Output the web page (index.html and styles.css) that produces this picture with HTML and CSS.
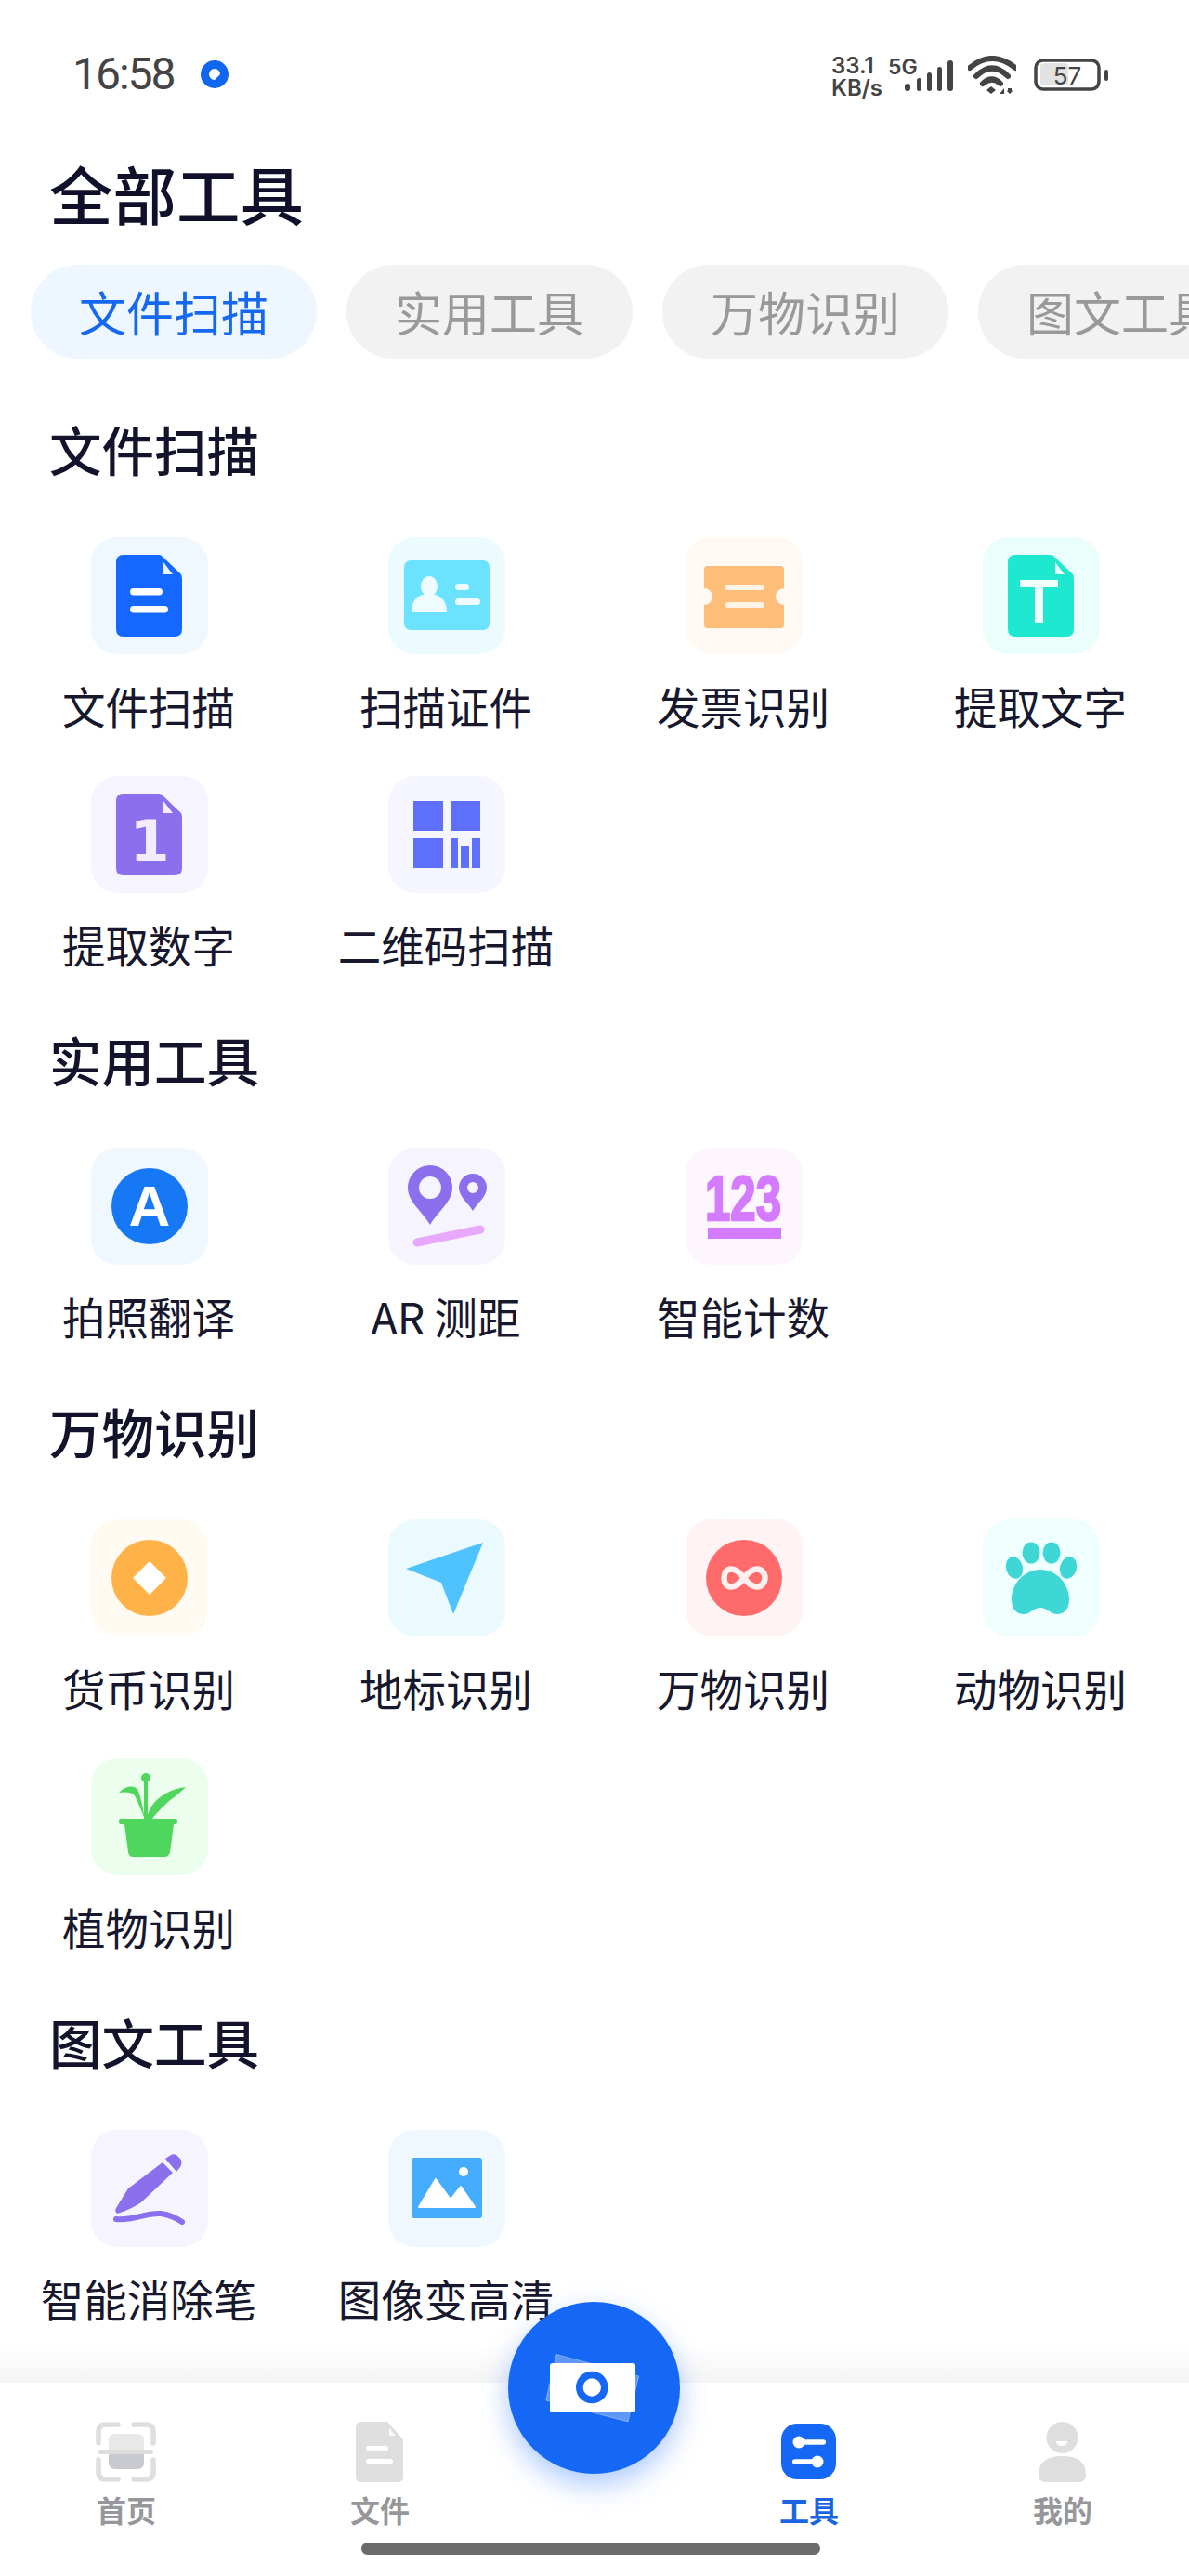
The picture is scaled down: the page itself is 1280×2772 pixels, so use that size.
FILE: index.html
```html
<!DOCTYPE html>
<html lang="zh-CN">
<head>
<meta charset="utf-8">
<title>全部工具</title>
<link rel="stylesheet" href="styles.css">
</head>
<body>
<div class="screen">
  <header class="status">
    <div class="status-left">
      <span class="time">16:58</span>
      <svg class="ring" viewBox="0 0 30 30" width="30" height="30"><circle cx="15" cy="15" r="10.5" fill="none" stroke="#1166ee" stroke-width="9"/><path d="M15 21 L21 15 L24 24 Z" fill="#1166ee"/></svg>
    </div>
    <div class="status-right">
      <div class="speed"><span>33.1</span><span>KB/s</span></div>
      <svg class="net" viewBox="0 0 70 40" width="70" height="40" fill="#444">
        <text x="0" y="20" class="fivegee">5G</text>
        <rect x="18" y="30" width="6" height="8" rx="3"/><rect x="31" y="24" width="5" height="14" rx="2.5"/><rect x="42" y="18" width="5" height="20" rx="2.5"/><rect x="53" y="12" width="5" height="26" rx="2.5"/><rect x="64" y="5" width="6" height="33" rx="3"/>
      </svg>
      <svg class="wifi" viewBox="0 0 52 44" width="52" height="44" fill="none" stroke="#444" stroke-width="6" stroke-linecap="round">
        <path d="M2 13 Q26 -7 51 13"/><path d="M9 22 Q26 5 43 22"/><path d="M16 30 Q26 21 35 30"/>
        <path d="M25 33 L30 37 L25 41 L20 37 Z" fill="#444" stroke="none"/>
        <path d="M34 41 L39 35 V41 Z M43 35 H47 V37 L48 38 L45 41 L42 38 L43 37 Z" fill="#444" stroke="none"/>
      </svg>
      <svg class="battery" viewBox="0 0 80 40" width="80" height="40">
        <rect x="7" y="8" width="30" height="24" rx="4" fill="#e2e2e2"/>
        <rect x="2" y="5" width="68" height="31" rx="8" fill="none" stroke="#444" stroke-width="3.5"/>
        <rect x="76" y="15" width="4" height="12" rx="2" fill="#444"/>
        <text x="36" y="31" class="batt-num">57</text>
      </svg>
    </div>
  </header>

  <h1 class="title">全部工具</h1>

  <nav class="tabs">
    <span class="tab active">文件扫描</span>
    <span class="tab">实用工具</span>
    <span class="tab">万物识别</span>
    <span class="tab">图文工具</span>
  </nav>

  <section class="section">
    <h2 class="heading">文件扫描</h2>
    <div class="grid">
      <div class="tool">
        <div class="tile bg-blue"><svg viewBox="0 0 126 126">
          <path d="M35 19 H73 Q76 19 77 21 L97 40 Q98 42 98 45 V99 Q98 107 90 107 H35 Q27 107 27 99 V27 Q27 19 35 19 Z" fill="#1468ff"/>
          <path d="M78 27 L88 40 H78 Z" fill="#eaf3ff"/>
          <rect x="42" y="55" width="35" height="7.5" rx="3.7" fill="#fff"/><rect x="42" y="74" width="41" height="7.5" rx="3.7" fill="#fff"/>
        </svg></div>
        <span class="label">文件扫描</span>
      </div>
      <div class="tool">
        <div class="tile bg-cyan"><svg viewBox="0 0 126 126">
          <rect x="17" y="25" width="92" height="75" rx="7" fill="#6be3ff"/>
          <ellipse cx="44" cy="53" rx="9" ry="11" fill="#eefcff"/>
          <path d="M25 81 Q25 65 37 62 H51 Q63 66 63 81 Z" fill="#eefcff"/>
          <rect x="72" y="50" width="15" height="7" rx="3.5" fill="#eefcff"/><rect x="72" y="66" width="27" height="7" rx="3.5" fill="#eefcff"/>
        </svg></div>
        <span class="label">扫描证件</span>
      </div>
      <div class="tool">
        <div class="tile bg-orange"><svg viewBox="0 0 126 126">
          <path d="M24 31 H102 Q106 31 106 35 V55 A9 9 0 0 0 106 73 V94 Q106 98 102 98 H24 Q20 98 20 94 V73 A9 9 0 0 0 20 55 V35 Q20 31 24 31 Z" fill="#ffbd7a"/>
          <rect x="43" y="51" width="42" height="6" rx="3" fill="#fff3e6"/><rect x="43" y="70" width="42" height="6" rx="3" fill="#fff3e6"/>
        </svg></div>
        <span class="label">发票识别</span>
      </div>
      <div class="tool">
        <div class="tile bg-teal"><svg viewBox="0 0 126 126">
          <path d="M35 19 H73 Q76 19 77 21 L97 40 Q98 42 98 45 V99 Q98 107 90 107 H35 Q27 107 27 99 V27 Q27 19 35 19 Z" fill="#1ee8d0"/>
          <path d="M78 27 L88 40 H78 Z" fill="#e8fffb"/>
          <rect x="40" y="46" width="41" height="8" fill="#f0fffc"/><rect x="56" y="46" width="9" height="46" fill="#f0fffc"/>
        </svg></div>
        <span class="label">提取文字</span>
      </div>
      <div class="tool">
        <div class="tile bg-violet"><svg viewBox="0 0 126 126">
          <path d="M35 19 H73 Q76 19 77 21 L97 40 Q98 42 98 45 V99 Q98 107 90 107 H35 Q27 107 27 99 V27 Q27 19 35 19 Z" fill="#8c6fec"/>
          <path d="M78 27 L88 40 H78 Z" fill="#f3efff"/>
          <text x="63" y="92" class="glyph-one">1</text>
        </svg></div>
        <span class="label">提取数字</span>
      </div>
      <div class="tool">
        <div class="tile bg-indigo"><svg viewBox="0 0 126 126" fill="#5e6ffb">
          <rect x="27" y="27" width="32" height="32"/><rect x="67" y="27" width="32" height="32"/><rect x="27" y="67" width="32" height="32"/>
          <rect x="67" y="67" width="8" height="32"/><rect x="78" y="75" width="9" height="24"/><rect x="90" y="67" width="9" height="32"/>
        </svg></div>
        <span class="label">二维码扫描</span>
      </div>
    </div>
  </section>

  <section class="section">
    <h2 class="heading">实用工具</h2>
    <div class="grid">
      <div class="tool">
        <div class="tile bg-blue"><svg viewBox="0 0 126 126">
          <circle cx="63" cy="63" r="41" fill="#1678f5"/>
          <text x="63" y="84" class="glyph-a">A</text>
        </svg></div>
        <span class="label">拍照翻译</span>
      </div>
      <div class="tool">
        <div class="tile bg-violet"><svg viewBox="0 0 126 126">
          <path fill-rule="evenodd" fill="#8c6fec" d="M45 83 C36 68 21 58 21 43 A24 24 0 0 1 69 43 C69 58 54 68 45 83 Z M45 31 A12 12 0 1 0 45 55 A12 12 0 1 0 45 31 Z"/>
          <path fill-rule="evenodd" fill="#8c6fec" d="M91 68 C86 59 76 53 76 43 A15 15 0 0 1 106 43 C106 53 96 59 91 68 Z M91 37 A6 6 0 1 0 91 49 A6 6 0 1 0 91 37 Z"/>
          <path d="M31 102 L99 88" stroke="#e8a8fb" stroke-width="9" stroke-linecap="round"/>
        </svg></div>
        <span class="label">AR 测距</span>
      </div>
      <div class="tool">
        <div class="tile bg-pink"><svg viewBox="0 0 126 126">
          <text x="21" y="78" class="glyph-nums" textLength="82" lengthAdjust="spacingAndGlyphs">123</text>
          <rect x="24" y="86" width="79" height="12" fill="#d47bff"/>
        </svg></div>
        <span class="label">智能计数</span>
      </div>
    </div>
  </section>

  <section class="section">
    <h2 class="heading">万物识别</h2>
    <div class="grid">
      <div class="tool">
        <div class="tile bg-cream"><svg viewBox="0 0 126 126">
          <circle cx="63" cy="63" r="41" fill="#ffb248"/>
          <path d="M63 45 L81 63 L63 81 L45 63 Z" fill="#fff"/>
        </svg></div>
        <span class="label">货币识别</span>
      </div>
      <div class="tool">
        <div class="tile bg-sky"><svg viewBox="0 0 126 126">
          <path d="M102 25 L19 53 L57 68 L70 102 Z" fill="#4fc3ff"/>
        </svg></div>
        <span class="label">地标识别</span>
      </div>
      <div class="tool">
        <div class="tile bg-red"><svg viewBox="0 0 126 126">
          <circle cx="63" cy="63" r="41" fill="#ff6b6b"/>
          <path d="M63 63 C57 55 52 53.500 49 53.500 C44 53.500 41.500 58 41.500 63 C41.500 68 44 72.500 49 72.500 C52 72.500 57 71 63 63 C69 55 74 53.500 77 53.500 C82 53.500 85.500 58 85.500 63 C85.500 68 82 72.500 77 72.500 C74 72.500 69 71 63 63 Z" fill="none" stroke="#fff0f0" stroke-width="6.500"/>
        </svg></div>
        <span class="label">万物识别</span>
      </div>
      <div class="tool">
        <div class="tile bg-mint"><svg viewBox="0 0 126 126" fill="#3fd6d6">
          <ellipse cx="34" cy="52" rx="9" ry="12" transform="rotate(-15 34 52)"/>
          <ellipse cx="52" cy="36" rx="9.500" ry="11.500"/>
          <ellipse cx="74" cy="36" rx="9.500" ry="11.500"/>
          <ellipse cx="92" cy="52" rx="9" ry="12" transform="rotate(15 92 52)"/>
          <path d="M62 54 C80 54 93 70 93 86 C93 97 87 102 80 102 C73 102 69 95 62 95 C55 95 51 102 44 102 C37 102 31 97 31 86 C31 70 44 54 62 54 Z"/>
        </svg></div>
        <span class="label">动物识别</span>
      </div>
      <div class="tool">
        <div class="tile bg-green"><svg viewBox="0 0 126 126" fill="#4fd65c">
          <path d="M32 65 H91 Q93 65 93 68 Q93 71 91 71 H89 L85 101 Q84 106 79 106 H45 Q41 106 40 101 L36 71 H32 Q30 71 30 68 Q30 65 32 65 Z"/>
          <circle cx="59" cy="21" r="5"/>
          <rect x="57" y="21" width="4" height="46"/>
          <path d="M30 37 C36 31 44 28 50 33 C54 42 56 55 58 66 C54 56 50 45 46 39 C42 36 36 36 30 37 Z"/>
          <path d="M102 31 C86 33 72 41 65 52 C62 57 60 62 59 66 H65 C70 59 78 52 84 46 C91 41 97 36 102 31 Z"/>
        </svg></div>
        <span class="label">植物识别</span>
      </div>
    </div>
  </section>

  <section class="section">
    <h2 class="heading">图文工具</h2>
    <div class="grid">
      <div class="tool">
        <div class="tile bg-violet"><svg viewBox="0 0 126 126">
          <path d="M28 90 Q25 87 27 84 L40 63 L77 35 L88 46 L54 78 Q42 86 28 90 Z" fill="#8c6fec"/>
          <path d="M80 31 L86 27 Q90 25 93 28 L96 31 Q99 35 96 40 L92 45 Z" fill="#8c6fec"/>
          <path d="M27 96 C45 98 58 89 75 90 C85 91 92 95 98 99" fill="none" stroke="#8c6fec" stroke-width="6" stroke-linecap="round"/>
        </svg></div>
        <span class="label">智能消除笔</span>
      </div>
      <div class="tool">
        <div class="tile bg-blue"><svg viewBox="0 0 126 126">
          <rect x="25" y="30" width="76" height="65" rx="3" fill="#45adff"/>
          <circle cx="81" cy="45" r="5" fill="#fff"/>
          <path d="M33 83 L51 53 L67 75 L78 61 L93 83 Z" fill="#fff" stroke="#fff" stroke-width="2" stroke-linejoin="round"/>
        </svg></div>
        <span class="label">图像变高清</span>
      </div>
    </div>
  </section>

  <footer class="bar">
    <div class="bar-grid">
      <div class="nav-item">
        <svg viewBox="0 0 66 66" width="66" height="66">
          <path d="M24 3 H11 Q3 3 3 11 V23 M41 3 H54 Q62 3 62 11 V23 M24 62 H11 Q3 62 3 54 V41 M41 62 H54 Q62 62 62 54 V41" fill="none" stroke="#dedede" stroke-width="5.500" stroke-linecap="round"/>
          <path d="M14 30 V20 Q14 13 21 13 H45 Q52 13 52 20 V30 Z" fill="#e8e8e8"/>
          <path d="M14 35 H52 V44 Q52 51 45 51 H21 Q14 51 14 44 Z" fill="#c9cacf"/>
          <rect x="3" y="30" width="59" height="5" rx="2.500" fill="#dcdcdc"/>
        </svg>
        <span class="nav-label">首页</span>
      </div>
      <div class="nav-item">
        <svg viewBox="0 0 52 66" width="52" height="66">
          <path d="M6 0 H34 L51 19 V60 Q51 65 45 65 H6 Q0 65 0 60 V6 Q0 0 6 0 Z" fill="#dedede"/>
          <path d="M36 7 L43 15 H36 Z" fill="#fafafa"/>
          <rect x="11" y="26" width="24" height="5" rx="2.500" fill="#fff"/><rect x="11" y="40" width="29" height="5" rx="2.500" fill="#fff"/>
        </svg>
        <span class="nav-label">文件</span>
      </div>
      <div></div>
      <div class="nav-item">
        <svg viewBox="0 0 60 66" width="60" height="66">
          <rect x="0" y="2" width="59" height="60" rx="17" fill="#1468f5"/>
          <circle cx="19" cy="22" r="6.500" fill="#fff"/><rect x="19" y="19.250" width="29" height="5.500" rx="2.750" fill="#fff"/>
          <circle cx="39" cy="43" r="6.500" fill="#fff"/><rect x="12" y="40.250" width="27" height="5.500" rx="2.750" fill="#fff"/>
        </svg>
        <span class="nav-label on">工具</span>
      </div>
      <div class="nav-item">
        <svg viewBox="0 0 52 66" width="52" height="66">
          <circle cx="25.500" cy="17" r="17" fill="#dedede"/>
          <path d="M18.500 21 H31.500 Q30 26 25 26 Q20 26 18.500 21 Z" fill="#fff"/>
          <path d="M8 65 Q0 65 0 57 Q0 37 25.500 37 Q51 37 51 57 Q51 65 43 65 Z" fill="#dedede"/>
        </svg>
        <span class="nav-label">我的</span>
      </div>
    </div>
    <div class="home-indicator"></div>
  </footer>

  <div class="fab">
    <svg viewBox="0 0 185 185" width="185" height="185">
      <path d="M52 56.500 L140.700 80 L129 129 L40.700 106 Z" fill="#fff" fill-opacity=".32" stroke="#fff" stroke-opacity=".32" stroke-width="1" stroke-linejoin="round"/>
      <rect x="45" y="66" width="92" height="53" rx="3" fill="#fff"/>
      <circle cx="90.300" cy="92" r="13.500" fill="none" stroke="#1468f5" stroke-width="7.600"/>
    </svg>
  </div>
</div>
</body>
</html>
```
FILE: styles.css
```css
* { box-sizing: border-box; margin: 0; padding: 0; }
html, body { width: 1280px; height: 2772px; background: #fff; overflow: hidden; }
body { font-family: "Noto Sans CJK SC", "Noto Sans", sans-serif; color: #13132b; }
.screen { position: relative; width: 1280px; height: 2772px; overflow: hidden; background: #fff; }

.status { height: 160px; padding: 60px 87px 0 78px; display: flex; justify-content: space-between; align-items: flex-start; }
.status-left { display: flex; align-items: center; gap: 28px; height: 40px; }
.time { font-family: Roboto, sans-serif; font-size: 48px; line-height: 40px; color: #444; letter-spacing: -2px; }
.status-right { display: flex; align-items: flex-start; }
.speed { width: 61px; display: flex; flex-direction: column; font-family: Inter, sans-serif; font-weight: 600; font-size: 24px; line-height: 24px; color: #444; margin-top: -1px; white-space: nowrap; }
.net { overflow: visible; }
.fivegee { font-family: Inter, sans-serif; font-weight: 600; font-size: 23px; }
.wifi { margin-left: 16px; }
.battery { margin-left: 19px; }
.batt-num { font-family: Inter, sans-serif; font-size: 26px; fill: #444; text-anchor: middle; }

.title { font-size: 68.5px; font-weight: 500; line-height: 96px; padding-left: 53px; color: #10102a; }

.tabs { display: flex; gap: 32px; padding-left: 33px; margin-top: 29px; width: 1280px; overflow: hidden; }
.tab { flex: 0 0 308px; height: 101px; border-radius: 50px; background: #f2f2f2; color: #999; font-size: 51px; line-height: 101px; text-align: center; white-space: nowrap; }
.tab.active { background: #eef7ff; color: #1668f0; }

.section { margin-top: 51px; }
.tabs + .section { margin-top: 59px; }
.heading { font-size: 56.5px; font-weight: 500; line-height: 75px; height: 80px; padding-left: 53px; }
.grid { display: grid; grid-template-columns: repeat(4, 320px); row-gap: 41px; margin-top: 53px; }
.tool { display: flex; flex-direction: column; align-items: center; height: 216px; }
.tile { width: 126px; height: 126px; border-radius: 28px; margin-left: 2px; }
.tile svg { display: block; width: 126px; height: 126px; overflow: visible; }
.label { margin-top: 23px; font-size: 46.5px; line-height: 64px; white-space: nowrap; color: #17172d; }

.bg-blue { background: #f0f8ff; }
.bg-cyan { background: #ecfbff; }
.bg-orange { background: #fff8f3; }
.bg-teal { background: #eafffb; }
.bg-violet { background: #f6f4ff; }
.bg-indigo { background: #f5f6ff; }
.bg-pink { background: #fdf6ff; }
.bg-cream { background: #fffbf3; }
.bg-sky { background: #ebfaff; }
.bg-red { background: #fff3f4; }
.bg-mint { background: #eefffe; }
.bg-green { background: #ecffee; }

.glyph-one { font-family: "DejaVu Sans", sans-serif; font-weight: 700; font-size: 62px; fill: #f3ecff; text-anchor: middle; }
.glyph-a { font-family: "Liberation Sans", sans-serif; font-weight: 700; font-size: 62px; fill: #fff; text-anchor: middle; }
.glyph-nums { font-family: "Liberation Sans", sans-serif; font-weight: 700; font-size: 69px; fill: #d47bff; stroke: #d47bff; stroke-width: 2.5px; }

.bar { position: absolute; left: 0; right: 0; top: 2520px; bottom: 0; padding-top: 86px; background: linear-gradient(#fff 0, #f5f5f5 44px, #fff 44px); }
.bar-grid { display: grid; grid-template-columns: 272px 274px 188px 274px 272px; }
.nav-item { display: flex; flex-direction: column; align-items: center; }
.nav-item svg { display: block; width: auto; height: 66px; }
.nav-label { margin-top: 7px; font-size: 32px; line-height: 42px; font-weight: 700; color: #97979b; }
.nav-label.on { color: #1b66e0; }
.home-indicator { width: 494px; height: 13px; margin: 15px 0 0 389px; border-radius: 7px; background: #6b6b6b; }

.fab { position: absolute; left: 547px; top: 2477px; width: 185px; height: 185px; border-radius: 50%; background: #1468f5; box-shadow: 0 12px 30px rgba(20, 104, 245, .35); }
.fab svg { display: block; }
```
